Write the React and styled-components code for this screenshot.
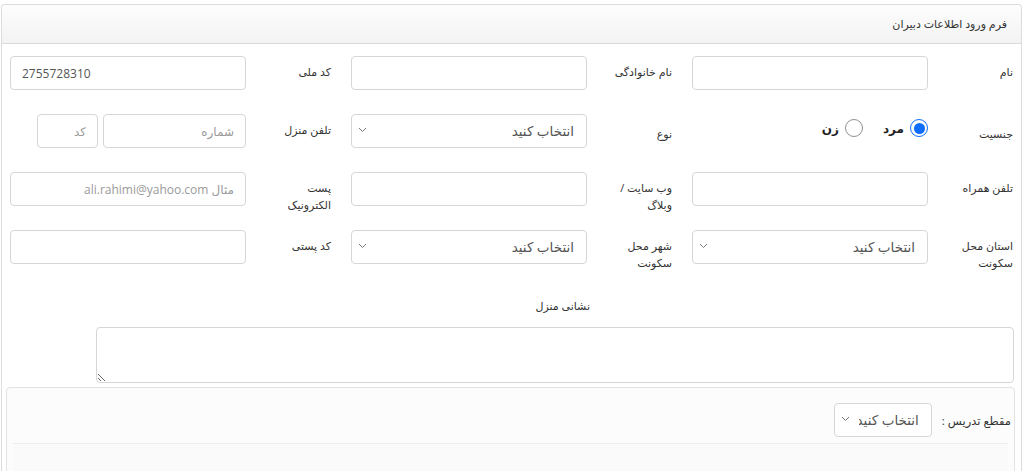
import React from 'react';
import styled, { createGlobalStyle } from 'styled-components';

const GlobalStyle = createGlobalStyle`
  html, body {
    margin: 0;
    padding: 0;
    background: #fff;
  }
  body {
    font-family: "Open Sans", "DejaVu Sans", sans-serif;
    color: #333;
  }
`;

const Panel = styled.div`
  direction: rtl;
  margin: 4px 2px 0 1px;
  border: 1px solid #dcdcdc;
  border-bottom: none;
  border-radius: 4px 4px 0 0;
  height: 467px;
  overflow: hidden;
`;

const PanelHeader = styled.div`
  height: 39px;
  box-sizing: border-box;
  padding: 11px 14px 0;
  font-size: 11px;
  color: #333;
  background: linear-gradient(#fdfdfd, #f3f3f3);
  border-bottom: 1px solid #dadada;
  border-radius: 4px 4px 0 0;
`;

const PanelBody = styled.div`
  padding-top: 12px;
`;

const Row = styled.div`
  display: flex;
  height: 34px;
  margin-bottom: 24px;
`;

const Field = styled.div`
  display: flex;
  flex: none;
  width: 341px;
  align-items: flex-start;
`;

const Label = styled.label`
  width: 87px;
  flex: none;
  box-sizing: border-box;
  padding: ${(p) => (p.$low ? '11px' : '7px')} 8px 0 16px;
  font-size: 11px;
  line-height: 17px;
  color: #333;
`;

const Control = styled.div`
  width: 236px;
  flex: none;
  margin-right: 6px;
  display: flex;
  gap: 5px;
  position: relative;
`;

const Input = styled.input`
  box-sizing: border-box;
  width: ${(p) => p.$w || '100%'};
  height: 34px;
  border: 1px solid #d6d6d6;
  border-radius: 4px;
  padding: 0 11px;
  font-family: "Open Sans", "DejaVu Sans", sans-serif;
  font-size: 12px;
  color: #555;
  background: #fff;
  direction: ${(p) => (p.$ltr ? 'ltr' : 'rtl')};
  outline: none;
  &::placeholder {
    color: #9a9a9a;
  }
`;

const SelectWrap = styled.div`
  position: relative;
  width: ${(p) => p.$w || '100%'};
`;

const Select = styled.select`
  box-sizing: border-box;
  width: 100%;
  height: 34px;
  appearance: none;
  border: 1px solid #d6d6d6;
  border-radius: 4px;
  padding: 0 12px 0 24px;
  font-family: "Open Sans", "DejaVu Sans", sans-serif;
  font-size: 13.5px;
  color: #555;
  background: #fff;
  direction: rtl;
  outline: none;
`;

const Chevron = styled.svg`
  position: absolute;
  left: 7px;
  top: 13px;
  pointer-events: none;
`;

const RadioGroup = styled.div`
  display: flex;
  align-items: center;
  gap: 20px;
  padding-top: 5px;
`;

const RadioItem = styled.label`
  display: flex;
  align-items: center;
  gap: 6px;
  font-size: 12px;
  font-weight: bold;
  color: #222;
`;

const RadioDot = styled.span`
  width: 18px;
  height: 18px;
  box-sizing: border-box;
  border-radius: 50%;
  border: 1px solid ${(p) => (p.$on ? '#0d6efd' : '#8f8f8f')};
  background: #fff;
  display: flex;
  align-items: center;
  justify-content: center;
  &::after {
    content: '';
    width: 11px;
    height: 11px;
    border-radius: 50%;
    background: ${(p) => (p.$on ? '#0d6efd' : 'transparent')};
  }
`;

const AddressLabel = styled.div`
  font-size: 11px;
  line-height: 17px;
  padding: 9px 431px 0 0;
  height: 30px;
`;

const TextArea = styled.textarea`
  display: block;
  box-sizing: border-box;
  margin: 0 7px 0 0;
  width: 918px;
  height: 56px;
  border: 1px solid #d6d6d6;
  border-radius: 4px;
  resize: vertical;
  font-family: "Open Sans", "DejaVu Sans", sans-serif;
  direction: rtl;
`;

const SubPanel = styled.div`
  margin: 4px 6px 0 4px;
  border: 1px solid #e2e4e2;
  border-radius: 4px;
  background: #fbfcfb;
  height: 120px;
`;

const SubRow = styled.div`
  display: flex;
  align-items: center;
  padding: 9px 0 0 0;
  gap: 10px;
  height: 56px;
  border-bottom: 1px solid #eceeec;
  margin: 0 6px 0 6px;
  box-sizing: border-box;
`;

const SubLabel = styled.label`
  font-size: 11.5px;
  color: #333;
  margin-right: -3px;
`;

const SubBody = styled.div`
  background: #f9faf9;
  height: 60px;
  margin: 0 6px;
`;

function Arrow() {
  return (
    <Chevron width="9" height="6" viewBox="0 0 9 6">
      <path d="M1 1l3.5 3.5L8 1" fill="none" stroke="#777" strokeWidth="1" />
    </Chevron>
  );
}

function Choose({ w }) {
  return (
    <SelectWrap $w={w}>
      <Select defaultValue="">
        <option value="">انتخاب کنید</option>
      </Select>
      <Arrow />
    </SelectWrap>
  );
}

export default function App() {
  return (
    <>
      <GlobalStyle />
      <Panel>
        <PanelHeader>فرم ورود اطلاعات دبیران</PanelHeader>
        <PanelBody>
          <Row>
            <Field>
              <Label>نام</Label>
              <Control><Input /></Control>
            </Field>
            <Field>
              <Label>نام خانوادگی</Label>
              <Control><Input /></Control>
            </Field>
            <Field>
              <Label>کد ملی</Label>
              <Control><Input $ltr defaultValue="2755728310" /></Control>
            </Field>
          </Row>
          <Row>
            <Field>
              <Label $low>جنسیت</Label>
              <Control>
                <RadioGroup>
                  <RadioItem><RadioDot $on />مرد</RadioItem>
                  <RadioItem><RadioDot />زن</RadioItem>
                </RadioGroup>
              </Control>
            </Field>
            <Field>
              <Label $low>نوع</Label>
              <Control><Choose /></Control>
            </Field>
            <Field>
              <Label>تلفن منزل</Label>
              <Control>
                <Input $w="143px" placeholder="شماره" />
                <Input $w="61px" placeholder="کد" />
              </Control>
            </Field>
          </Row>
          <Row>
            <Field>
              <Label>تلفن همراه</Label>
              <Control><Input /></Control>
            </Field>
            <Field>
              <Label>وب سایت / وبلاگ</Label>
              <Control><Input /></Control>
            </Field>
            <Field>
              <Label>پست الکترونیک</Label>
              <Control><Input placeholder="مثال ali.rahimi@yahoo.com" /></Control>
            </Field>
          </Row>
          <Row>
            <Field>
              <Label>استان محل سکونت</Label>
              <Control><Choose /></Control>
            </Field>
            <Field>
              <Label>شهر محل سکونت</Label>
              <Control><Choose /></Control>
            </Field>
            <Field>
              <Label>کد پستی</Label>
              <Control><Input /></Control>
            </Field>
          </Row>
          <AddressLabel>نشانی منزل</AddressLabel>
          <TextArea />
          <SubPanel>
            <SubRow>
              <SubLabel>مقطع تدریس :</SubLabel>
              <Choose w="98px" />
            </SubRow>
            <SubBody />
          </SubPanel>
        </PanelBody>
      </Panel>
    </>
  );
}
